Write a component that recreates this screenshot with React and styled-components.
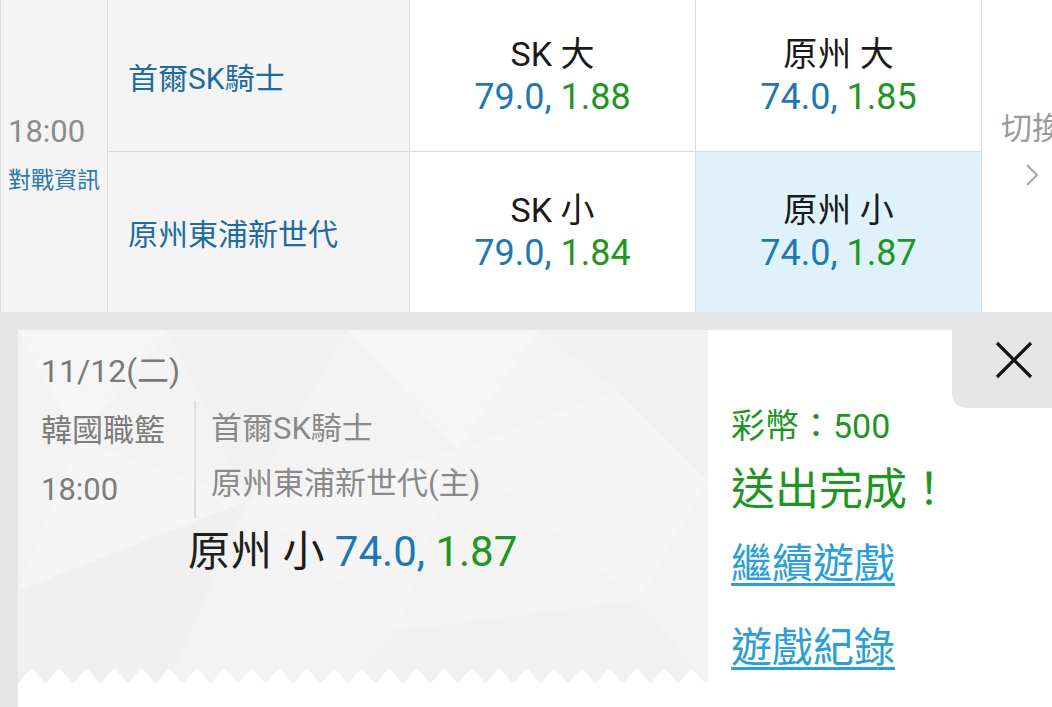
import React from "react";
import styled, { createGlobalStyle } from "styled-components";

const Global = createGlobalStyle`
  html, body { margin: 0; padding: 0; overflow: hidden; background: #fff; }
  body {
    font-family: Roboto, "Noto Sans CJK TC", "Noto Sans", sans-serif;
    width: 1052px;
    height: 707px;
  }
  #root { width: 1052px; height: 707px; overflow: hidden; }
`;

const Page = styled.div`
  width: 1082px;
  height: 707px;
  display: flex;
  flex-direction: column;
`;

/* ---------- odds table ---------- */
const Table = styled.div`
  display: grid;
  grid-template-columns: 108px 302px 286px 286px 100px;
  grid-template-rows: 152px 160px;
`;

const Cell = styled.div`
  box-sizing: border-box;
  border-right: 1px solid #dcdcdc;
  display: flex;
  border-bottom: ${(p) => (p.$top ? "1px solid #d2dce2" : "none")};
`;

const TimeCell = styled(Cell)`
  grid-row: span 2;
  background: #f4f4f4;
  border-left: 1px solid #dcdcdc;
  flex-direction: column;
  justify-content: center;
  padding: 0 0 4px 7px;
`;

const TimeText = styled.div`
  font-size: 31px;
  line-height: 40px;
  color: #8c8c8c;
`;

const InfoLink = styled.div`
  margin-top: 14px;
  font-size: 23px;
  line-height: 30px;
  color: #2a78ad;
`;

const TeamCell = styled(Cell)`
  background: #f4f4f4;
  align-items: center;
  padding-left: 20px;
  font-size: 30px;
  color: #1f6c9f;
`;

const OddsCell = styled(Cell)`
  background: ${(p) => (p.$selected ? "#dff2fb" : "#ffffff")};
  flex-direction: column;
  align-items: center;
  justify-content: center;
`;

const BetLabel = styled.div`
  font-size: 34px;
  line-height: 43px;
  color: #1a1a1a;
  white-space: nowrap;
`;

const OddsLine = styled.div`
  font-size: 36px;
  line-height: 43px;
  white-space: nowrap;
`;

const Line = styled.span`
  color: #1f78b4;
`;

const Rate = styled.span`
  color: #1f9624;
`;

const SwitchCell = styled(Cell)`
  grid-row: span 2;
  background: #ffffff;
  border-right: none;
  flex-direction: column;
  align-items: center;
  justify-content: center;
  padding-bottom: 16px;
`;

const SwitchText = styled.div`
  font-size: 31px;
  line-height: 40px;
  color: #9a9a9a;
  white-space: nowrap;
`;

const Chevron = styled.svg`
  margin-top: 14px;
  width: 14px;
  height: 24px;
`;

/* ---------- bet slip ---------- */
const Bottom = styled.div`
  flex: 1;
  position: relative;
  background: #e6e6e6;
  padding: 18px 0 0 18px;
  display: flex;
`;

const Sheet = styled.div`
  flex: 1;
  background: #ffffff;
  display: flex;
  align-items: flex-start;
`;

const Ticket = styled.div`
  position: relative;
  box-sizing: border-box;
  width: 690px;
  height: 354px;
  background: #f3f3f3;
  padding: 19px 0 0 23px;
  overflow: hidden;

  &::after {
    content: "";
    position: absolute;
    left: 0;
    right: 0;
    bottom: 0;
    height: 16px;
    background-image: conic-gradient(
      from 0deg at 50% 0,
      transparent 0deg 139deg,
      #ffffff 139deg 221deg,
      transparent 221deg 360deg
    );
    background-size: 27.5px 16px;
    background-repeat: repeat-x;
  }
`;

const Facets = styled.svg`
  position: absolute;
  inset: 0;
  width: 100%;
  height: 100%;
  pointer-events: none;
`;

const TicketBody = styled.div`
  position: relative;
`;

const DateText = styled.div`
  font-size: 32px;
  line-height: 44px;
  color: #7a7a7a;
`;

const InfoRow = styled.div`
  display: flex;
  margin-top: 8px;
`;

const MetaCol = styled.div`
  width: 153px;
  font-size: 31px;
  line-height: 59px;
  color: #7d7d7d;
`;

const TeamsCol = styled.div`
  border-left: 2px solid #dedede;
  padding-left: 15px;
  font-size: 31px;
  line-height: 55px;
  color: #8a8a8a;
`;

const Pick = styled.div`
  margin: 7px 0 0 147px;
  font-size: 42px;
  line-height: 52px;
  color: #1e1e1e;
  white-space: nowrap;
`;

const Result = styled.div`
  padding: 74px 0 0 23px;
  display: flex;
  flex-direction: column;
  align-items: flex-start;
`;

const Coins = styled.div`
  font-size: 34px;
  line-height: 44px;
  color: #1f9624;
`;

const Done = styled.div`
  margin-top: 14px;
  font-size: 44px;
  line-height: 56px;
  color: #1f9624;
`;

const ActionLink = styled.a`
  margin-top: ${(p) => p.$gap}px;
  font-size: 41px;
  line-height: 56px;
  color: #2a9ed8;
  text-decoration: underline;
  text-decoration-thickness: 3px;
  text-underline-offset: 5px;
  cursor: pointer;
`;

const CloseButton = styled.button`
  position: absolute;
  top: 0;
  right: 0;
  width: 130px;
  height: 96px;
  border: none;
  background: #e6e6e6;
  border-bottom-left-radius: 14px;
  padding: 0 0 0 43px;
  display: flex;
  align-items: center;
  cursor: pointer;
`;

export default function App() {
  return (
    <>
      <Global />
      <Page>
        <Table>
          <TimeCell>
            <TimeText>18:00</TimeText>
            <InfoLink>對戰資訊</InfoLink>
          </TimeCell>
          <TeamCell $top>首爾SK騎士</TeamCell>
          <OddsCell $top>
            <BetLabel>SK 大</BetLabel>
            <OddsLine>
              <Line>79.0, </Line>
              <Rate>1.88</Rate>
            </OddsLine>
          </OddsCell>
          <OddsCell $top>
            <BetLabel>原州 大</BetLabel>
            <OddsLine>
              <Line>74.0, </Line>
              <Rate>1.85</Rate>
            </OddsLine>
          </OddsCell>
          <SwitchCell>
            <SwitchText>切換</SwitchText>
            <Chevron viewBox="0 0 14 24">
              <path d="M2 2 L12 12 L2 22" fill="none" stroke="#a8a8a8" strokeWidth="2" />
            </Chevron>
          </SwitchCell>
          <TeamCell>原州東浦新世代</TeamCell>
          <OddsCell>
            <BetLabel>SK 小</BetLabel>
            <OddsLine>
              <Line>79.0, </Line>
              <Rate>1.84</Rate>
            </OddsLine>
          </OddsCell>
          <OddsCell $selected>
            <BetLabel>原州 小</BetLabel>
            <OddsLine>
              <Line>74.0, </Line>
              <Rate>1.87</Rate>
            </OddsLine>
          </OddsCell>
        </Table>

        <Bottom>
          <Sheet>
            <Ticket>
              <Facets viewBox="0 0 690 353" preserveAspectRatio="none">
                <polygon points="0,0 150,0 60,110" fill="#f6f6f6" />
                <polygon points="150,0 330,0 230,170" fill="#f1f1f1" />
                <polygon points="60,110 230,170 0,260" fill="#f5f5f5" />
                <polygon points="330,0 520,0 440,120" fill="#f6f6f6" />
                <polygon points="520,0 690,0 690,150 600,60" fill="#f1f1f1" />
                <polygon points="230,170 440,120 380,300" fill="#f5f5f5" />
                <polygon points="440,120 600,60 690,150 620,270" fill="#f5f5f5" />
                <polygon points="0,260 230,170 150,353 0,353" fill="#f0f0f0" />
                <polygon points="380,300 620,270 690,353 330,353" fill="#f1f1f1" />
              </Facets>
              <TicketBody>
                <DateText>11/12(二)</DateText>
                <InfoRow>
                  <MetaCol>
                    <div>韓國職籃</div>
                    <div>18:00</div>
                  </MetaCol>
                  <TeamsCol>
                    <div>首爾SK騎士</div>
                    <div>原州東浦新世代(主)</div>
                  </TeamsCol>
                </InfoRow>
                <Pick>
                  原州 小 <Line>74.0, </Line>
                  <Rate>1.87</Rate>
                </Pick>
              </TicketBody>
            </Ticket>
            <Result>
              <Coins>彩幣：500</Coins>
              <Done>送出完成！</Done>
              <ActionLink $gap={18}>繼續遊戲</ActionLink>
              <ActionLink $gap={28}>遊戲紀錄</ActionLink>
            </Result>
          </Sheet>
          <CloseButton aria-label="close">
            <svg width="38" height="38" viewBox="0 0 38 38">
              <path d="M2 2 L36 36 M36 2 L2 36" stroke="#111" strokeWidth="3.2" />
            </svg>
          </CloseButton>
        </Bottom>
      </Page>
    </>
  );
}
